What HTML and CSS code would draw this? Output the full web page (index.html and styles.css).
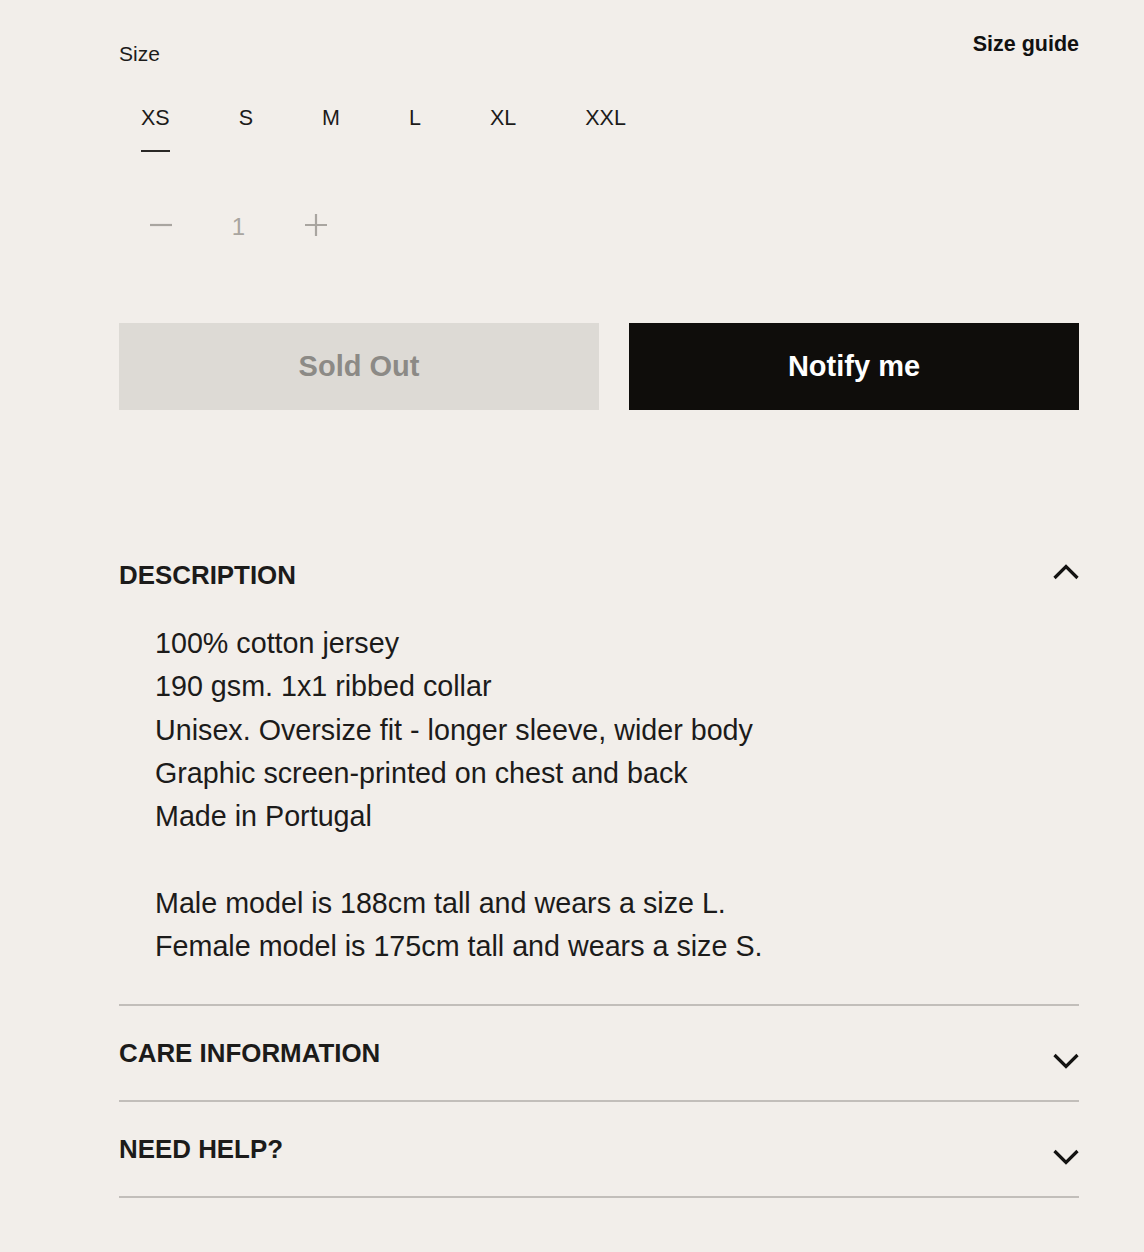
FILE: index.html
```html
<!DOCTYPE html>
<html lang="en">
<head>
<meta charset="utf-8">
<title>Product options</title>
<link rel="stylesheet" href="styles.css">
</head>
<body>
<main class="product-form">
  <div class="size-head">
    <span class="size-label">Size</span>
    <a class="size-guide" href="#">Size guide</a>
  </div>

  <ul class="sizes">
    <li class="size active"><span class="lbl">XS</span></li>
    <li class="size"><span class="lbl">S</span></li>
    <li class="size"><span class="lbl">M</span></li>
    <li class="size"><span class="lbl">L</span></li>
    <li class="size"><span class="lbl">XL</span></li>
    <li class="size"><span class="lbl">XXL</span></li>
  </ul>

  <div class="qty">
    <button class="qty-btn" type="button" aria-label="Decrease">
      <svg width="22" height="22" viewBox="0 0 22 22"><path d="M0 11H22" stroke="currentColor" stroke-width="2.2"/></svg>
    </button>
    <span class="qty-val">1</span>
    <button class="qty-btn" type="button" aria-label="Increase">
      <svg width="22" height="22" viewBox="0 0 22 22"><path d="M0 11H22M11 0V22" stroke="currentColor" stroke-width="2.2"/></svg>
    </button>
  </div>

  <div class="actions">
    <button class="btn btn-soldout" type="button" disabled>Sold Out</button>
    <button class="btn btn-notify" type="button">Notify me</button>
  </div>

  <div class="accordion">
    <section class="acc-item open">
      <header class="acc-head">
        <h3 class="acc-title">DESCRIPTION</h3>
        <svg class="chev" width="26" height="32" viewBox="0 0 26 32"><path d="M1.5 19L13 7.5L24.5 19" fill="none" stroke="currentColor" stroke-width="3.2"/></svg>
      </header>
      <div class="acc-body">
        <p>100% cotton jersey<br>190 gsm. 1x1 ribbed collar<br>Unisex. Oversize fit - longer sleeve, wider body<br>Graphic screen-printed on chest and back<br>Made in Portugal</p>
        <p>Male model is 188cm tall and wears a size L.<br>Female model is 175cm tall and wears a size S.</p>
      </div>
    </section>
    <section class="acc-item">
      <header class="acc-head">
        <h3 class="acc-title">CARE INFORMATION</h3>
        <svg class="chev" width="26" height="32" viewBox="0 0 26 32"><path d="M1.5 18L13 29.5L24.5 18" fill="none" stroke="currentColor" stroke-width="3.2"/></svg>
      </header>
    </section>
    <section class="acc-item">
      <header class="acc-head">
        <h3 class="acc-title">NEED HELP?</h3>
        <svg class="chev" width="26" height="32" viewBox="0 0 26 32"><path d="M1.5 18L13 29.5L24.5 18" fill="none" stroke="currentColor" stroke-width="3.2"/></svg>
      </header>
    </section>
  </div>
</main>
</body>
</html>
```

FILE: styles.css
```css
html, body {
  margin: 0;
  padding: 0;
  background: #f2eeea;
}

body {
  font-family: "Liberation Sans", Arial, Helvetica, sans-serif;
  color: #1c1b1a;
}

.product-form {
  width: 960px;
  margin-left: 119px;
  padding-top: 32px;
  padding-bottom: 52px;
}

/* size header */
.size-head {
  display: flex;
  justify-content: space-between;
  align-items: flex-start;
}

.size-label {
  font-size: 21px;
  line-height: 24px;
  margin-top: 10px;
}

.size-guide {
  font-size: 21.5px;
  line-height: 24px;
  font-weight: 700;
  color: #111;
  text-decoration: none;
}

/* sizes */
.sizes {
  list-style: none;
  margin: 40px 0 0;
  padding: 0;
  display: flex;
  gap: 25px;
}

.size {
  padding: 0 22px;
  font-size: 21.5px;
  line-height: 24px;
  color: #1c1b1a;
}

.size .lbl {
  display: block;
  padding-bottom: 20px;
  border-bottom: 2px solid transparent;
}

.size.active .lbl {
  border-bottom-color: #2a2826;
}

/* quantity */
.qty {
  display: flex;
  align-items: center;
  margin: 51px 0 0 20px;
  height: 44px;
  color: #a9a5a0;
}

.qty-btn {
  width: 44px;
  height: 44px;
  padding: 0;
  border: 0;
  background: none;
  color: inherit;
  display: flex;
  align-items: center;
  justify-content: center;
}

.qty-btn svg {
  display: block;
}

.qty-val {
  width: 111px;
  text-align: center;
  font-size: 24px;
  line-height: 26px;
  padding-top: 4px;
}

/* actions */
.actions {
  display: grid;
  grid-template-columns: 480px 1fr;
  gap: 30px;
  margin-top: 76px;
}

.btn {
  height: 87px;
  border: 0;
  padding: 0;
  font-family: inherit;
  font-size: 29px;
  font-weight: 700;
}

.btn-soldout {
  background: #dddad5;
  color: #8c8a86;
}

.btn-notify {
  background: #0f0d0b;
  color: #ffffff;
}

/* accordion */
.accordion {
  margin-top: 119px;
}

.acc-item {
  border-bottom: 2px solid #c2beba;
}

.acc-head {
  display: flex;
  justify-content: space-between;
  align-items: center;
  height: 94px;
}

.acc-item.open .acc-head {
  height: 92px;
}

.acc-title {
  margin: 0;
  font-size: 25.9px;
  line-height: 30px;
  font-weight: 700;
  color: #1c1b1a;
}

.chev {
  display: block;
  color: #141312;
  overflow: visible;
}

.acc-body {
  padding: 1px 0 36px 36px;
  font-size: 28.7px;
  line-height: 43.3px;
}

.acc-body p {
  margin: 0;
}

.acc-body p + p {
  margin-top: 43.3px;
}
```
